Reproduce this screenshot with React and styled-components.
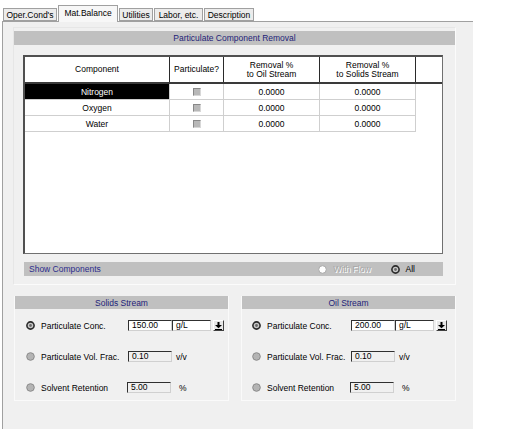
import React from "react";
import styled, { createGlobalStyle } from "styled-components";

const Global = createGlobalStyle`
  html, body { margin: 0; padding: 0; background: #ffffff; }
  body { font-family: "Liberation Sans", Arial, sans-serif; font-size: 8.5px; color: #000; }
  * { box-sizing: border-box; }
`;

const Window = styled.div`
  width: 471px;
  margin-left: 2px;
  height: 429px;
  display: flex;
  flex-direction: column;
`;

const TabBar = styled.div`
  display: flex;
  align-items: flex-end;
  height: 21px;
  padding-left: 1px;
  gap: 1px;
  position: relative;
  z-index: 1;
`;

const Tab = styled.div`
  height: ${(p) => (p.$active ? "17px" : "13px")};
  width: ${(p) => p.$w}px;
  margin-bottom: ${(p) => (p.$active ? "-1px" : "0")};
  display: flex;
  align-items: center;
  justify-content: center;
  padding-bottom: ${(p) => (p.$active ? "3px" : "0")};
  background: ${(p) => (p.$active ? "#f7f7f7" : "#ececec")};
  border: 1px solid #a0a0a0;
  border-bottom: ${(p) => (p.$active ? "none" : "1px solid #a0a0a0")};
  color: #000;
  white-space: nowrap;
`;

const Panel = styled.div`
  flex: 1;
  background: #f0f0f0;
  border-left: 1px solid #a0a0a0;
  border-top: 1px solid #a0a0a0;
  padding: 5px 0 0 10px;
  display: flex;
  flex-direction: column;
`;

const Section = styled.div`
  width: 443px;
  height: 258px;
  border: 1px solid #fbfbfb;
  border-top-color: #e6e6e6;
  border-left-color: #e6e6e6;
  padding-top: 3px;
  display: flex;
  flex-direction: column;
`;

const HeaderBar = styled.div`
  height: ${(p) => p.$h || 14}px;
  background: #c0c0c0;
  color: #1e1e78;
  display: flex;
  align-items: center;
  justify-content: center;
`;

const TableBox = styled.div`
  margin: 10px 0 0 9px;
  width: 420px;
  height: 199px;
  background: #ffffff;
  border-top: 2px solid #505050;
  border-left: 2px solid #505050;
  border-right: 1px solid #707070;
  border-bottom: 1px solid #707070;
  display: flex;
  flex-direction: column;
`;

const cols = "145px 54px 96px 96px 25px";

const HeadRow = styled.div`
  display: grid;
  grid-template-columns: ${cols};
  height: 27px;
  border-bottom: 2px solid #3a3a3a;
`;

const HeadCell = styled.div`
  display: flex;
  align-items: center;
  justify-content: center;
  text-align: center;
  line-height: 9px;
  border-right: 1px solid #2a2a2a;
  &:last-child { border-right: none; }
`;

const DataRow = styled.div`
  display: grid;
  grid-template-columns: 145px 54px 96px 96px;
  width: 391px;
  height: 16px;
  border-bottom: 1px solid #cfcfcf;
`;

const Cell = styled.div`
  display: flex;
  align-items: center;
  justify-content: center;
  border-right: 1px solid #cfcfcf;
  background: ${(p) => (p.$selected ? "#000000" : "transparent")};
  color: ${(p) => (p.$selected ? "#ffffff" : "#000000")};
`;

const Check = styled.span`
  width: 8px;
  height: 8px;
  background: #b8b8b8;
  border-top: 1px solid #888;
  border-left: 1px solid #888;
  border-right: 1px solid #d8d8d8;
  border-bottom: 1px solid #d8d8d8;
`;

const ShowBar = styled.div`
  margin: 8px 0 0 10px;
  width: 419px;
  height: 14px;
  background: #c0c0c0;
  display: flex;
  align-items: center;
  padding: 0 28px 0 5px;
  color: #2c2c8c;
`;

const ShowLabel = styled.span`
  flex: 1;
`;

const RadioOpt = styled.span`
  display: flex;
  align-items: center;
  gap: 6px;
  margin-left: ${(p) => p.$ml || 0}px;
  color: ${(p) => (p.$disabled ? "#a8a8a8" : "#000")};
  text-shadow: ${(p) => (p.$disabled ? "1px 1px 0 #ffffff" : "none")};
`;

const StreamRow = styled.div`
  display: flex;
  gap: 12px;
  margin: 11px 0 0 1px;
`;

const Group = styled.div`
  width: 215px;
  height: 105px;
  border-left: 1px solid #fafafa;
  border-right: 1px solid #fafafa;
  border-bottom: 1px solid #fafafa;
  display: flex;
  flex-direction: column;
`;

const Rows = styled.div`
  display: flex;
  flex-direction: column;
  gap: 20px;
  padding-top: 11px;
`;

const FieldRow = styled.div`
  display: flex;
  align-items: center;
  height: 11px;
  padding-left: ${(p) => p.$pl}px;
`;

const Label = styled.span`
  width: ${(p) => p.$w}px;
  margin-left: 6px;
  white-space: nowrap;
`;

const Field = styled.div`
  width: ${(p) => p.$w}px;
  height: 11px;
  background: ${(p) => (p.$disabled ? "#f0f0f0" : "#ffffff")};
  border-top: 1px solid #303030;
  border-left: 1px solid #303030;
  border-right: 1px solid #d0d0d0;
  border-bottom: 1px solid #d0d0d0;
  padding-left: 3px;
  display: flex;
  align-items: center;
  line-height: 9px;
`;

const DropBtn = styled.div`
  width: 11px;
  height: 11px;
  margin-left: 2px;
  background: #e8e8e8;
  border-top: 1px solid #ffffff;
  border-left: 1px solid #ffffff;
  border-right: 1px solid #404040;
  border-bottom: 1px solid #404040;
  display: flex;
  align-items: center;
  justify-content: center;
`;

const Unit = styled.span`
  margin-left: ${(p) => p.$ml}px;
`;

function Radio({ checked, disabled }) {
  if (disabled) {
    return (
      <svg width="9" height="9" viewBox="0 0 9 9">
        <circle cx="4.5" cy="4.5" r="3.8" fill="#ffffff" stroke="#a8a8a8" strokeWidth="1" />
      </svg>
    );
  }
  if (checked) {
    return (
      <svg width="9" height="9" viewBox="0 0 9 9">
        <circle cx="4.5" cy="4.5" r="3.6" fill="#c8c8c8" stroke="#2a2a2a" strokeWidth="1.6" />
        <circle cx="4.5" cy="4.5" r="1.4" fill="#6a6a6a" />
      </svg>
    );
  }
  return (
    <svg width="9" height="9" viewBox="0 0 9 9">
      <circle cx="4.5" cy="4.5" r="3.8" fill="#b4b4b4" stroke="#8a8a8a" strokeWidth="1" />
    </svg>
  );
}

function DownArrow() {
  return (
    <svg width="7" height="8" viewBox="0 0 7 8">
      <rect x="2.5" y="0" width="2" height="3" fill="#000" />
      <polygon points="0,3 7,3 3.5,6.2" fill="#000" />
      <rect x="0" y="7" width="7" height="1" fill="#000" />
    </svg>
  );
}

const components = ["Nitrogen", "Oxygen", "Water"];

function Stream({ title, conc, pl, labelW }) {
  return (
    <Group>
      <HeaderBar $h={13}>{title}</HeaderBar>
      <Rows>
        <FieldRow $pl={pl}>
          <Radio checked />
          <Label $w={labelW}>Particulate Conc.</Label>
          <Field $w={44}>{conc}</Field>
          <Field $w={39}>g/L</Field>
          <DropBtn>
            <DownArrow />
          </DropBtn>
        </FieldRow>
        <FieldRow $pl={pl}>
          <Radio />
          <Label $w={labelW}>Particulate Vol. Frac.</Label>
          <Field $w={44} $disabled>0.10</Field>
          <Unit $ml={4}>v/v</Unit>
        </FieldRow>
        <FieldRow $pl={pl}>
          <Radio />
          <Label $w={labelW - 1}>Solvent Retention</Label>
          <Field $w={44} $disabled>5.00</Field>
          <Unit $ml={8}>%</Unit>
        </FieldRow>
      </Rows>
    </Group>
  );
}

export default function App() {
  return (
    <>
      <Global />
      <Window>
        <TabBar>
          <Tab $w={54}>Oper.Cond's</Tab>
          <Tab $w={60} $active>Mat.Balance</Tab>
          <Tab $w={34}>Utilities</Tab>
          <Tab $w={49}>Labor, etc.</Tab>
          <Tab $w={50}>Description</Tab>
        </TabBar>
        <Panel>
          <Section>
            <HeaderBar>Particulate Component Removal</HeaderBar>
            <TableBox>
              <HeadRow>
                <HeadCell>Component</HeadCell>
                <HeadCell>Particulate?</HeadCell>
                <HeadCell>
                  Removal %
                  <br />
                  to Oil Stream
                </HeadCell>
                <HeadCell>
                  Removal %
                  <br />
                  to Solids Stream
                </HeadCell>
                <HeadCell />
              </HeadRow>
              {components.map((c, i) => (
                <DataRow key={c}>
                  <Cell $selected={i === 0}>{c}</Cell>
                  <Cell>
                    <Check />
                  </Cell>
                  <Cell>0.0000</Cell>
                  <Cell>0.0000</Cell>
                </DataRow>
              ))}
            </TableBox>
            <ShowBar>
              <ShowLabel>Show Components</ShowLabel>
              <RadioOpt $disabled>
                <Radio disabled />
                With Flow
              </RadioOpt>
              <RadioOpt $ml={20}>
                <Radio checked />
                All
              </RadioOpt>
            </ShowBar>
          </Section>
          <StreamRow>
            <Stream title="Solids Stream" conc="150.00" pl={11} labelW={87} />
            <Stream title="Oil Stream" conc="200.00" pl={10} labelW={84} />
          </StreamRow>
        </Panel>
      </Window>
    </>
  );
}
